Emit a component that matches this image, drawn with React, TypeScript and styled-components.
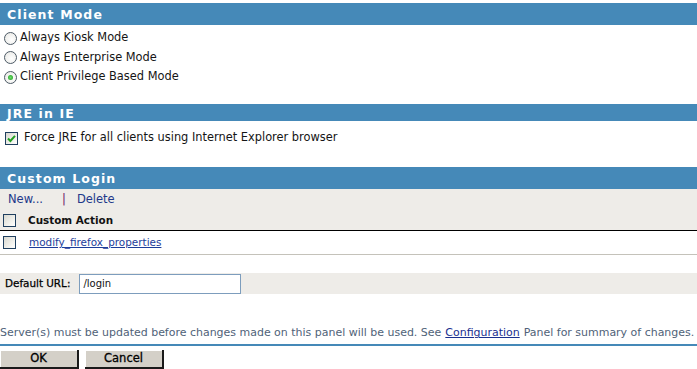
import React from "react";
import styled, { createGlobalStyle } from "styled-components";

const Global = createGlobalStyle`
  html, body { margin: 0; padding: 0; background: #ffffff; overflow: hidden; }
  body { font-family: "DejaVu Sans", Verdana, sans-serif; font-size: 11px; color: #151515; line-height: 1.2; }
`;

const Page = styled.div`
  width: 697px;
  padding-top: 3px;
  display: flex;
  flex-direction: column;
`;

const SectionHeader = styled.div<{ $h: number }>`
  height: ${(p) => p.$h}px;
  background: #4589b8;
  color: #ffffff;
  font-weight: bold;
  font-size: 12.5px;
  letter-spacing: 1.1px;
  display: flex;
  align-items: center;
  padding-left: 7px;
  padding-top: 1px;
  box-sizing: border-box;
`;

const OptionList = styled.div<{ $pt: number; $pb: number }>`
  display: flex;
  flex-direction: column;
  padding-top: ${(p) => p.$pt}px;
  padding-bottom: ${(p) => p.$pb}px;
`;

const OptionRow = styled.label<{ $h: number; $gap?: number; $pl?: number }>`
  height: ${(p) => p.$h}px;
  display: flex;
  align-items: center;
  gap: ${(p) => p.$gap ?? 3}px;
  padding-left: ${(p) => p.$pl ?? 4}px;
  font-size: 11.4px;
`;

const RadioMark = styled.span<{ $on?: boolean }>`
  width: 11px;
  height: 11px;
  border-radius: 50%;
  border: 1px solid #4d5a66;
  background: radial-gradient(circle at 60% 60%, #ffffff 0%, #e6e6e2 100%);
  display: flex;
  align-items: center;
  justify-content: center;
  box-sizing: content-box;
  &::after {
    content: "";
    width: 5px;
    height: 5px;
    border-radius: 50%;
    background: ${(p) => (p.$on ? "radial-gradient(circle, #6ade6a 0%, #1f9a1f 100%)" : "transparent")};
  }
`;

const Box = styled.span`
  width: 11px;
  height: 11px;
  border: 1px solid #1f3f5f;
  background: linear-gradient(135deg, #d8d8d0 0%, #f4f4f0 70%, #ffffff 100%);
  display: flex;
  align-items: center;
  justify-content: center;
  flex-shrink: 0;
`;

const Check = () => (
  <svg width="9" height="9" viewBox="0 0 9 9">
    <path d="M1 4.5 L3.4 7 L8 1.8" fill="none" stroke="#22a022" strokeWidth="2" />
  </svg>
);

const Toolbar = styled.div`
  background: #eeece8;
  display: flex;
  flex-direction: column;
`;

const ActionLinks = styled.div`
  height: 21px;
  display: flex;
  align-items: center;
  padding-left: 8px;
  font-size: 11.5px;
`;

const ActionLink = styled.span`
  color: #22388a;
`;

const Sep = styled.span`
  color: #6a1a6a;
  margin: 0 11px 0 19px;
`;

const TableHead = styled.div`
  height: 20px;
  display: flex;
  align-items: center;
  padding-left: 3px;
  gap: 12px;
  font-weight: bold;
  font-size: 10.4px;
  color: #111;
  border-bottom: 1px solid #000;
`;

const TableRow = styled.div`
  height: 23px;
  display: flex;
  align-items: center;
  padding-left: 3px;
  gap: 13px;
  border-bottom: 1px solid #c4c2ba;
`;

const RowLink = styled.a`
  color: #1c3d9a;
  text-decoration: underline;
  font-size: 10.45px;
`;

const UrlRow = styled.div`
  margin-top: 18px;
  height: 21px;
  background: #eeece8;
  display: flex;
  align-items: center;
  padding-left: 5px;
  gap: 9px;
`;

const UrlLabel = styled.span`
  font-size: 10.4px;
  color: #000;
  -webkit-text-stroke: 0.25px #000;
`;

const UrlInput = styled.div`
  box-sizing: border-box;
  width: 162px;
  height: 20px;
  border: 1px solid #7d9dbd;
  background: #fff;
  display: flex;
  align-items: center;
  padding-left: 3px;
  font-size: 10px;
  color: #111;
`;

const Message = styled.div`
  margin-top: 32px;
  height: 14px;
  display: flex;
  align-items: center;
  color: #4f6278;
  font-size: 10.97px;
  white-space: nowrap;
`;

const MsgLink = styled.a`
  color: #1a2f8f;
  text-decoration: underline;
  margin: 0 4px;
`;

const Rule = styled.div`
  margin-top: 4px;
  height: 2px;
  background: #4589b8;
`;

const Buttons = styled.div`
  display: flex;
  gap: 6px;
  padding-top: 4px;
`;

const Button = styled.button`
  width: 79px;
  height: 19px;
  padding: 0;
  background: #d4d0c8;
  border: none;
  border-right: 2px solid #1a1a1a;
  border-bottom: 2px solid #1a1a1a;
  box-shadow: inset 1px 1px 0 #ffffff;
  font-family: "DejaVu Sans", Verdana, sans-serif;
  font-size: 11.5px;
  color: #000;
  -webkit-text-stroke: 0.3px #000;
  line-height: 1;
`;

export default function App() {
  return (
    <>
      <Global />
      <Page>
        <SectionHeader $h={22}>Client Mode</SectionHeader>
        <OptionList $pt={3} $pb={17}>
          <OptionRow $h={20}><RadioMark />Always Kiosk Mode</OptionRow>
          <OptionRow $h={19}><RadioMark />Always Enterprise Mode</OptionRow>
          <OptionRow $h={20}><RadioMark $on />Client Privilege Based Mode</OptionRow>
        </OptionList>
        <SectionHeader $h={17}>JRE in IE</SectionHeader>
        <OptionList $pt={6} $pb={18}>
          <OptionRow $h={22} $gap={6} $pl={5}>
            <Box><Check /></Box>Force JRE for all clients using Internet Explorer browser
          </OptionRow>
        </OptionList>
        <SectionHeader $h={22}>Custom Login</SectionHeader>
        <Toolbar>
          <ActionLinks>
            <ActionLink>New...</ActionLink>
            <Sep>|</Sep>
            <ActionLink>Delete</ActionLink>
          </ActionLinks>
          <TableHead>
            <Box />
            Custom Action
          </TableHead>
        </Toolbar>
        <TableRow>
          <Box />
          <RowLink>modify_firefox_properties</RowLink>
        </TableRow>
        <UrlRow>
          <UrlLabel>Default URL:</UrlLabel>
          <UrlInput>/login</UrlInput>
        </UrlRow>
        <Message>
          Server(s) must be updated before changes made on this panel will be used. See
          <MsgLink>Configuration</MsgLink>
          Panel for summary of changes.
        </Message>
        <Rule />
        <Buttons>
          <Button>OK</Button>
          <Button>Cancel</Button>
        </Buttons>
      </Page>
    </>
  );
}
